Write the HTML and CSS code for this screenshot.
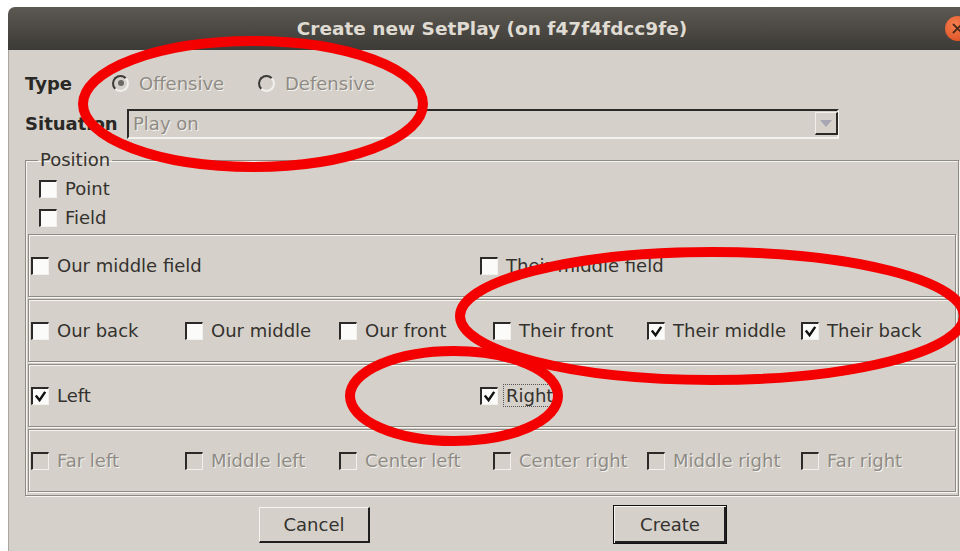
FILE: index.html
```html
<!DOCTYPE html>
<html lang="en">
<head>
<meta charset="utf-8">
<title>Create new SetPlay</title>
<link rel="stylesheet" href="styles.css">
</head>
<body>
<div class="window">
  <div class="titlebar">
    <h1 class="title">Create new SetPlay (on f47f4fdcc9fe)</h1>
    <span class="close"><svg width="25" height="25" viewBox="0 0 25 25"><path d="M8.5 8.5l8 8M16.5 8.5l-8 8" stroke="#4a2a1c" stroke-width="1.8" stroke-linecap="round"/></svg></span>
  </div>
  <div class="content">
    <div class="type-row">
      <span class="label type-label">Type</span>
      <span class="radio disabled"><span class="ring checked"></span>Offensive</span>
      <span class="radio disabled"><span class="ring"></span>Defensive</span>
    </div>
    <div class="sit-row">
      <span class="label sit-label">Situation</span>
      <div class="combo">
        <span class="combo-text">Play on</span>
        <span class="combo-btn"><svg width="12" height="7" viewBox="0 0 12 7"><path d="M0 0h12L6 7z" fill="#a9a6b3"/></svg></span>
      </div>
    </div>
    <fieldset class="group">
      <legend>Position</legend>
      <div class="checks">
        <div class="check"><span class="box"></span>Point</div>
        <div class="check"><span class="box"></span>Field</div>
      </div>
      <div class="frame two">
        <div class="check"><span class="box"></span>Our middle field</div>
        <div class="check"><span class="box"></span>Their middle field</div>
      </div>
      <div class="frame six">
        <div class="check"><span class="box"></span>Our back</div>
        <div class="check"><span class="box"></span>Our middle</div>
        <div class="check"><span class="box"></span>Our front</div>
        <div class="check"><span class="box"></span>Their front</div>
        <div class="check"><span class="box"><svg class="tick" viewBox="0 0 16 16"><path d="M3 7l4 5 6-9"/></svg></span>Their middle</div>
        <div class="check"><span class="box"><svg class="tick" viewBox="0 0 16 16"><path d="M3 7l4 5 6-9"/></svg></span>Their back</div>
      </div>
      <div class="frame two">
        <div class="check"><span class="box"><svg class="tick" viewBox="0 0 16 16"><path d="M3 7l4 5 6-9"/></svg></span>Left</div>
        <div class="check"><span class="box"><svg class="tick" viewBox="0 0 16 16"><path d="M3 7l4 5 6-9"/></svg></span><span class="focus">Right</span></div>
      </div>
      <div class="frame six">
        <div class="check disabled"><span class="box"></span>Far left</div>
        <div class="check disabled"><span class="box"></span>Middle left</div>
        <div class="check disabled"><span class="box"></span>Center left</div>
        <div class="check disabled"><span class="box"></span>Center right</div>
        <div class="check disabled"><span class="box"></span>Middle right</div>
        <div class="check disabled"><span class="box"></span>Far right</div>
      </div>
    </fieldset>
    <div class="buttons">
      <button class="btn cancel">Cancel</button>
      <button class="btn create">Create</button>
    </div>
  </div>
</div>
<svg class="marks" width="960" height="551" viewBox="0 0 960 551">
  <ellipse cx="253" cy="104" rx="170" ry="63"/>
  <ellipse cx="712" cy="316" rx="252" ry="64"/>
  <ellipse cx="454" cy="396" rx="104" ry="45"/>
</svg>
</body>
</html>
```

FILE: styles.css
```css
body {
  margin: 0;
  background: #fff;
  overflow: hidden;
  font-family: "DejaVu Sans", sans-serif;
  font-size: 18px;
  color: #34322e;
}

.window {
  position: relative;
  margin: 7px 0 0 8px;
  width: 968px;
  height: 544px;
}

/* window title bar */
.titlebar {
  height: 43px;
  display: grid;
  grid-template-columns: 1fr auto 1fr;
  align-items: center;
  background: linear-gradient(#5c5852, #3d3b37);
  border-radius: 7px 7px 0 0;
}

.title {
  grid-column: 2;
  margin: 0;
  font: bold 18.5px "DejaVu Sans", sans-serif;
  color: #dfdbd2;
  white-space: nowrap;
}

.close {
  grid-column: 3;
  justify-self: end;
  margin-right: 6px;
  width: 25px;
  height: 25px;
  border-radius: 50%;
  background: radial-gradient(circle at 40% 35%, #f6804f, #d8461b);
  display: flex;
}

/* dialog body */
.content {
  height: 501px;
  box-sizing: border-box;
  background: #d5d1ca;
  border-left: 1px solid #aaa69f;
  padding-left: 16px;
}

.label {
  font-weight: bold;
  color: #2a2926;
}

.type-row {
  display: flex;
  align-items: center;
  height: 32px;
  padding-top: 17px;
}

.type-label { width: 87px; }

.radio {
  display: flex;
  align-items: center;
  gap: 10px;
  width: 146px;
}

.disabled {
  color: #8f8b85;
  text-shadow: 1px 1px 0 #f4f2ee;
}

.ring {
  position: relative;
  width: 17px;
  height: 17px;
  box-sizing: border-box;
  border-radius: 50%;
  border: 2px solid;
  border-color: #3b3a37 #f2f0ec #f2f0ec #3b3a37;
}

.ring.checked::after {
  content: "";
  position: absolute;
  left: 3.5px;
  top: 3.5px;
  width: 6px;
  height: 6px;
  border-radius: 50%;
  background: #6a6864;
}

.sit-row {
  display: flex;
  align-items: center;
  height: 31px;
  margin-top: 9px;
}

.sit-label { width: 102px; }

.combo {
  width: 712px;
  height: 30px;
  box-sizing: border-box;
  display: flex;
  align-items: center;
  border: 2px solid;
  border-color: #2a2927 #f4f2ee #f4f2ee #2a2927;
  padding-left: 4px;
}

.combo-text {
  flex: 1;
  color: #8f8b85;
  text-shadow: 1px 1px 0 #f4f2ee;
}

.combo-btn {
  width: 23px;
  height: 23px;
  box-sizing: border-box;
  margin-right: -1px;
  display: flex;
  align-items: center;
  justify-content: center;
  border: 2px solid;
  border-color: #f1efeb #2a2927 #2a2927 #f1efeb;
  border-width: 1px 2px 2px 1px;
}

/* position group */
.group {
  width: 933px;
  box-sizing: border-box;
  margin: 11px 0 0 0;
  padding: 0 2px 3px 2px;
  border: 1px solid #8e8b85;
  box-shadow: inset 1px 1px 0 #f6f4f0, 1px 1px 0 #f6f4f0;
}

.group legend {
  margin-left: 10px;
  padding: 0 2px;
  line-height: 20px;
}

.checks {
  padding: 4px 0 0 11px;
  margin-bottom: 2px;
}

.checks .check { height: 29px; }

.check {
  display: flex;
  align-items: center;
  gap: 8px;
  white-space: nowrap;
}

.box {
  width: 18px;
  height: 18px;
  box-sizing: border-box;
  flex: none;
  background: #fbfbfa;
  border-style: solid;
  border-width: 2px 1px 1px 2px;
  border-color: #2b2a28 #f3f1ed #f3f1ed #2b2a28;
  display: flex;
}

.disabled .box { background: #d5d1ca; }

.tick {
  width: 15px;
  height: 15px;
  fill: none;
  stroke: #111;
  stroke-width: 2.6;
}

.focus {
  outline: 1px dotted #555;
  padding: 0 2px;
  margin-left: -2px;
}

.frame {
  height: 63px;
  box-sizing: border-box;
  margin-top: 2px;
  padding-left: 2px;
  display: grid;
  align-items: center;
  border: 1px solid #8e8b85;
  box-shadow: inset 1px 1px 0 #f7f5f1, 1px 1px 0 #f7f5f1;
}

.checks + .frame { margin-top: 0; }

.frame.two { grid-template-columns: 449px 1fr; }
.frame.six { grid-template-columns: repeat(6, 154px); }

/* dialog buttons */
.buttons {
  display: flex;
  align-items: center;
  height: 39px;
  margin-top: 9px;
  padding-left: 234px;
  gap: 243px;
}

.btn {
  font: 18px "DejaVu Sans", sans-serif;
  color: #34322e;
  background: #d5d1ca;
  padding: 0;
  box-sizing: border-box;
}

.cancel {
  width: 111px;
  height: 36px;
  border-style: solid;
  border-width: 1px 2px 2px 1px;
  border-color: #f6f4f0 #1f1f1f #1f1f1f #f6f4f0;
}

.create {
  width: 114px;
  height: 39px;
  border: 1px solid #111;
  box-shadow: inset 1px 1px 0 #f6f4f0, inset -2px -2px 0 #1f1f1f;
}

/* red annotation marks drawn over the dialog */
.marks {
  position: absolute;
  left: 0;
  top: 0;
  pointer-events: none;
}

.marks ellipse {
  fill: none;
  stroke: #f50000;
  stroke-width: 10;
}
```
